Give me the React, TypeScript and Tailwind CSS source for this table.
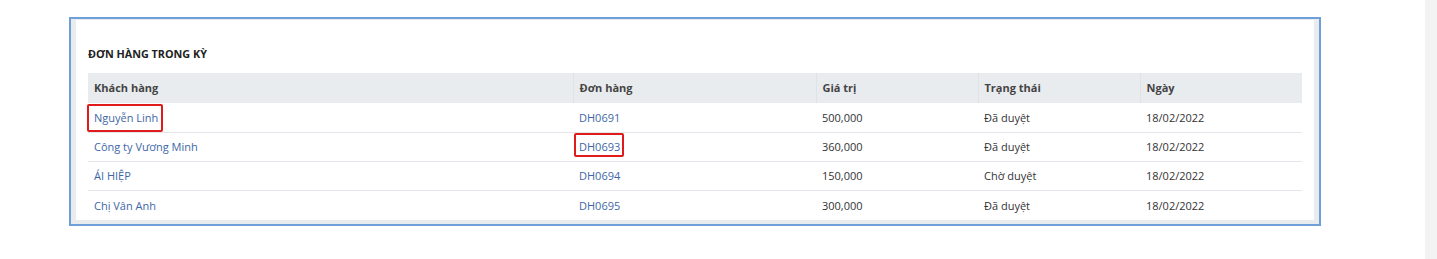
import React from 'react';

const rows = [
  { customer: 'Nguyễn Linh', order: 'DH0691', value: '500,000', status: 'Đã duyệt', date: '18/02/2022', markCustomer: true },
  { customer: 'Công ty Vương Minh', order: 'DH0693', value: '360,000', status: 'Đã duyệt', date: '18/02/2022', markOrder: true },
  { customer: 'ÁI HIỆP', order: 'DH0694', value: '150,000', status: 'Chờ duyệt', date: '18/02/2022' },
  { customer: 'Chị Vân Anh', order: 'DH0695', value: '300,000', status: 'Đã duyệt', date: '18/02/2022' },
];

const cols = ['Khách hàng', 'Đơn hàng', 'Giá trị', 'Trạng thái', 'Ngày'];
const widths = ['w-[485px]', 'w-[243px]', 'w-[162px]', 'w-[162px]', 'w-[162px]'];

export default function App() {
  return (
    <div className="flex h-[259px] w-[1437px] bg-white font-['Open_Sans',sans-serif] text-[11px] text-[#333]">
      <div className="flex-1 pl-[69px] pt-[17px]">
        <div className="w-[1252px] border-2 border-[#6f9fd8] bg-[#e9ecef] pl-[5px] pr-[5px] pt-px pb-[4px]">
          <div className="bg-white px-3 pt-[26px] pb-px">
            <h2 className="text-[10.8px] font-bold uppercase text-[#222] leading-[16px]">Đơn hàng trong kỳ</h2>
            <table className="mt-[11px] w-[1214px] border-collapse table-fixed">
              <thead>
                <tr className="bg-[#e9ecef] h-[30px]">
                  {cols.map((c, i) => (
                    <th
                      key={c}
                      className={`${widths[i]} px-[6px] pt-px text-left font-bold text-[#444] ${i > 0 ? 'border-l border-[#dfe3e7]' : ''}`}
                    >
                      {c}
                    </th>
                  ))}
                </tr>
              </thead>
              <tbody>
                {rows.map((r, i) => (
                  <tr key={r.order} className={`h-[29px] ${i < rows.length - 1 ? 'border-b border-[#e3e6ea]' : ''}`}>
                    <td className="px-[6px] pt-[2px]">
                      <span className="relative text-[#3d67a6]">
                        {r.customer}
                        {r.markCustomer && (
                          <span className="absolute -left-[7px] -right-[5px] -top-[6px] -bottom-[7px] rounded-[2px] border-2 border-[#e01b1b]" />
                        )}
                      </span>
                    </td>
                    <td className="px-[6px] pt-[2px]">
                      <span className="relative text-[#3d67a6]">
                        {r.order}
                        {r.markOrder && (
                          <span className="absolute -left-[5px] -right-[4px] -top-[6px] -bottom-[3px] rounded-[2px] border-2 border-[#e01b1b]" />
                        )}
                      </span>
                    </td>
                    <td className="px-[6px] pt-[2px]">{r.value}</td>
                    <td className="px-[6px] pt-[2px]">{r.status}</td>
                    <td className="px-[6px] pt-[2px]">{r.date}</td>
                  </tr>
                ))}
              </tbody>
            </table>
          </div>
        </div>
      </div>
      <div className="w-[12px] bg-[#f3f3f3]" />
    </div>
  );
}
